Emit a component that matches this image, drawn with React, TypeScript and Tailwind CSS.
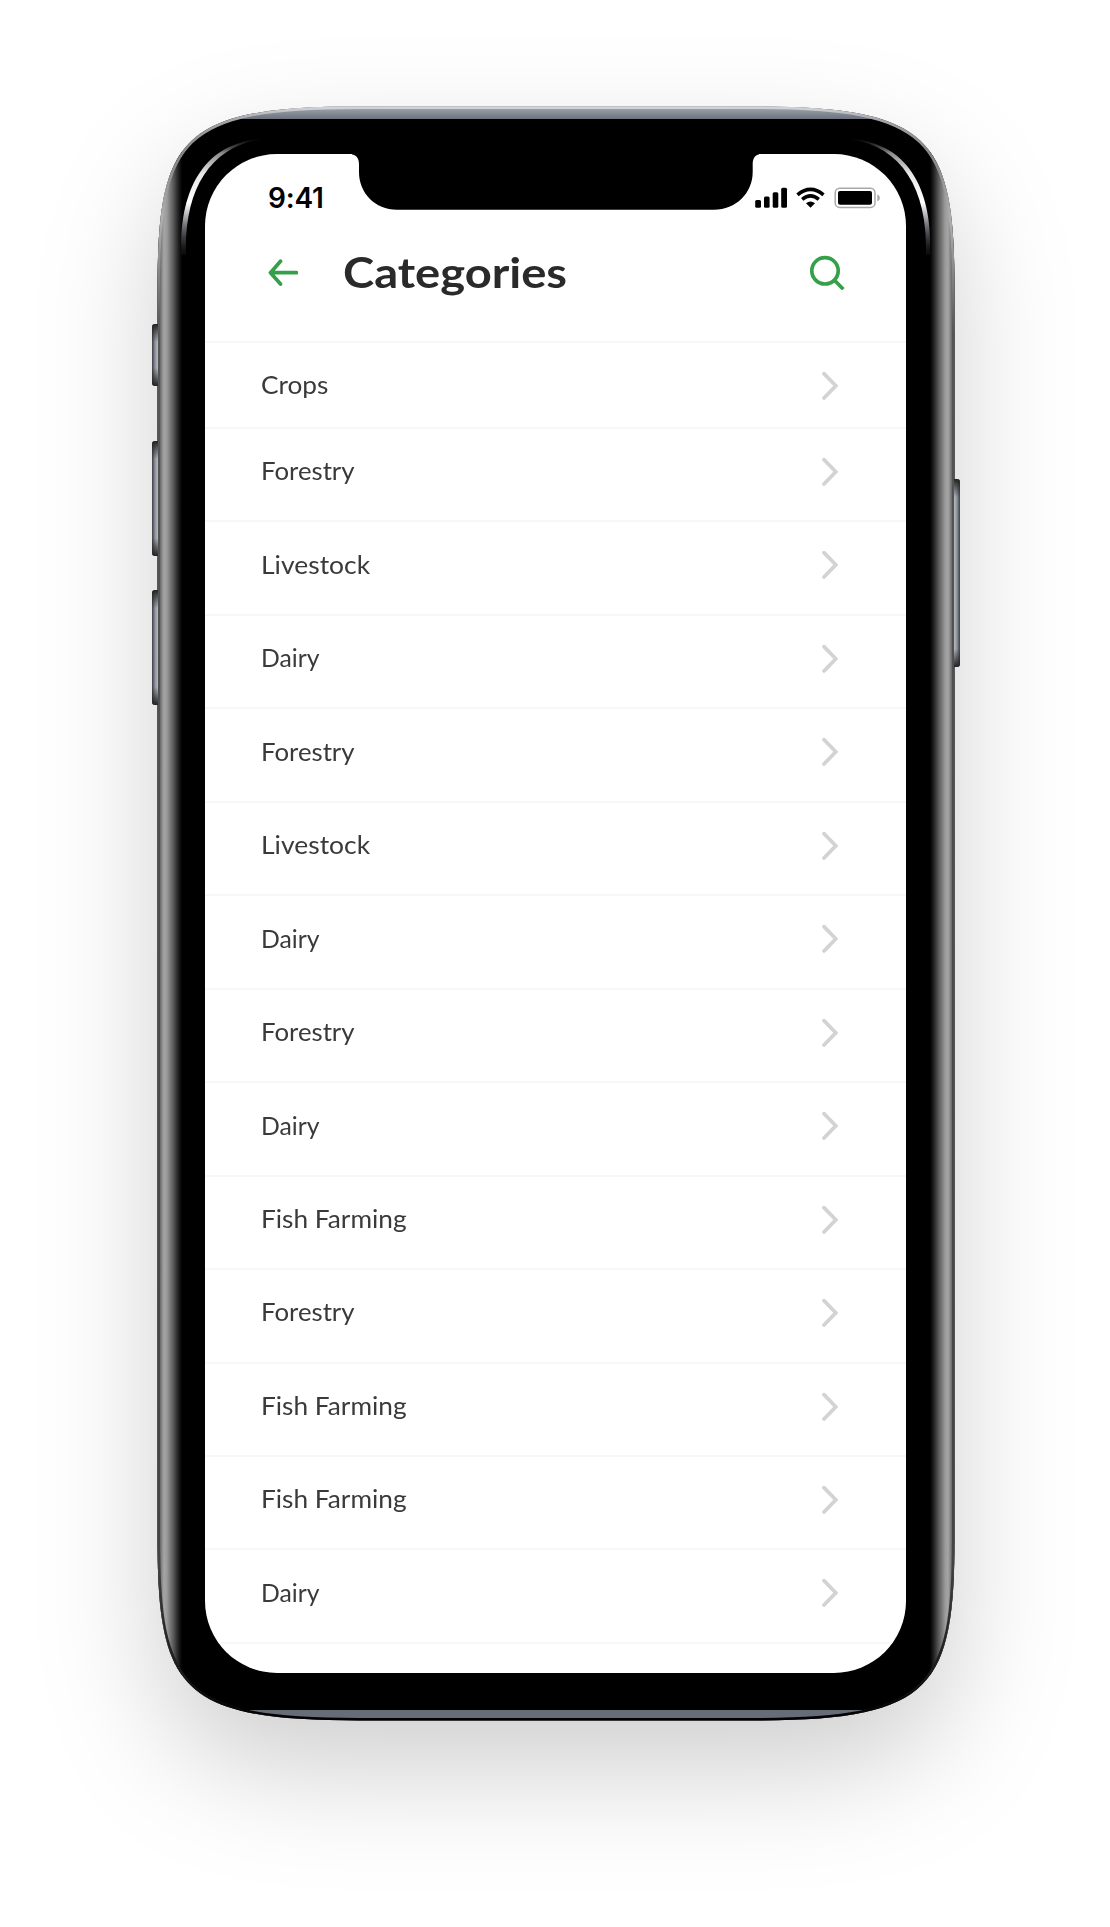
import React from "react";

const OUTLINE =
  "M0.5 184 C0.5 32 23 0.5 202 0.5 H596 C775 0.5 797.5 32 797.5 184 V1431 C797.5 1583 775 1614.5 596 1614.5 H202 C23 1614.5 0.5 1583 0.5 1431 Z";

const WIDTHS: Record<string, string> = {
  Crops: "scale-x-[1.05]",
  Forestry: "scale-x-[1.03]",
  Livestock: "scale-x-[1.058]",
  Dairy: "scale-x-[0.99]",
  "Fish Farming": "scale-x-[1.05]",
};

const CATEGORIES = [
  "Crops",
  "Forestry",
  "Livestock",
  "Dairy",
  "Forestry",
  "Livestock",
  "Dairy",
  "Forestry",
  "Dairy",
  "Fish Farming",
  "Forestry",
  "Fish Farming",
  "Fish Farming",
  "Dairy",
];

function PhoneBody() {
  return (
    <svg className="absolute inset-0 overflow-visible" width="798" height="1615" viewBox="0 0 798 1615" fill="none">
      <defs>
        <clipPath id="body">
          <path d={OUTLINE} />
        </clipPath>
        <linearGradient id="side" x1="0" x2="1" y1="0" y2="0">
          <stop offset="0" stopColor="#454545" />
          <stop offset="0.13" stopColor="#6b6b6b" />
          <stop offset="0.2" stopColor="#8a8a8a" />
          <stop offset="0.28" stopColor="#a6a6a6" />
          <stop offset="0.4" stopColor="#999999" />
          <stop offset="0.65" stopColor="#5a5a5a" />
          <stop offset="0.85" stopColor="#222222" />
          <stop offset="1" stopColor="#000000" />
        </linearGradient>
        <linearGradient id="top" x1="0" x2="0" y1="0" y2="1">
          <stop offset="0" stopColor="#d6d7dc" />
          <stop offset="0.22" stopColor="#cdced4" />
          <stop offset="0.27" stopColor="#969ca6" />
          <stop offset="1" stopColor="#6d737e" />
        </linearGradient>
        <linearGradient id="rim" x1="0" x2="0" y1="0" y2="1">
          <stop offset="0" stopColor="#d6d7dc" />
          <stop offset="0.008" stopColor="#a6a6a8" />
          <stop offset="0.03" stopColor="#858585" />
          <stop offset="0.07" stopColor="#b0b0b0" />
          <stop offset="0.14" stopColor="#555555" />
          <stop offset="0.9" stopColor="#444444" />
          <stop offset="0.97" stopColor="#1a1a1a" />
          <stop offset="1" stopColor="#000000" />
        </linearGradient>
        <linearGradient id="glint" x1="0" x2="0" y1="33" y2="149" gradientUnits="userSpaceOnUse">
          <stop offset="0" stopColor="#333" stopOpacity="0.2" />
          <stop offset="0.12" stopColor="#8a8a8a" />
          <stop offset="0.3" stopColor="#e8e8e8" />
          <stop offset="0.55" stopColor="#ffffff" />
          <stop offset="0.75" stopColor="#6f7078" />
          <stop offset="1" stopColor="#222" stopOpacity="0.3" />
        </linearGradient>
        <filter id="soft" x="-300" y="-300" width="1400" height="2300" filterUnits="userSpaceOnUse">
          <feGaussianBlur stdDeviation="58" />
        </filter>
      </defs>
      <path d={OUTLINE} transform="translate(0 50)" fill="#000" fillOpacity="0.19" filter="url(#soft)" />
      <g clipPath="url(#body)">
        <rect width="798" height="1615" fill="#000" />
        <rect width="25" height="1615" fill="url(#side)" />
        <rect width="25" height="1615" fill="url(#side)" transform="translate(798 0) scale(-1 1)" />
        <rect x="74" width="650" height="13" fill="url(#top)" />
        <rect x="90" y="1604" width="618" height="8" fill="#666d78" />
        <path d={OUTLINE} stroke="url(#rim)" strokeWidth="5" />
      </g>
      <path d="M24.500 149 C22 90 43 37 104 33 C54 41 27 82 29 149 Z" fill="url(#glint)" />
      <path d="M773 149 C776 90 755 37 694 33 C744 41 771 82 769 149 Z" fill="url(#glint)" />
    </svg>
  );
}

function SideButton({ className }: { className: string }) {
  return (
    <div className={`absolute w-[6px] overflow-hidden ${className}`}>
      <div className="h-full w-full bg-linear-to-b from-[#222] via-transparent via-[18px] to-transparent">
        <div className="h-full w-full bg-linear-to-t from-[#222] via-transparent via-[18px] to-transparent" />
      </div>
    </div>
  );
}

function Notch() {
  return (
    <svg className="absolute top-0 left-[147px]" width="407" height="57" viewBox="0 0 407 57">
      <path
        d="M0 0.500 C4.500 1 7 4.500 7 10.500 V18 C7 39 23 55.800 45 55.800 H362 C384 55.800 400.700 39 400.700 18 V10.500 C400.700 4.500 403 1 407 0.500 V0 H0 Z"
        fill="#000"
      />
    </svg>
  );
}

function StatusIcons() {
  return (
    <svg width="126" height="22" viewBox="0 0 126 22" fill="none">
      <g fill="#000">
        <rect x="0.200" y="13" width="5.800" height="7.700" rx="1.500" />
        <rect x="9" y="9.500" width="5.600" height="11.200" rx="1.500" />
        <rect x="17.700" y="5.200" width="5.600" height="15.500" rx="1.500" />
        <rect x="26.200" y="0.700" width="5.800" height="20" rx="1.500" />
      </g>
      <g stroke="#000" strokeWidth="3.600">
        <path d="M42.500 7.800 Q55.500 -3.200 68.500 7.800" />
        <path d="M47.200 12.300 Q55.500 5.600 63.800 12.300" />
      </g>
      <path d="M51 16.300 Q55.500 12.900 60 16.300 L55.500 20.800 Z" fill="#000" />
      <rect x="80.200" y="1.200" width="39.800" height="19.200" rx="4.500" stroke="#a8a8a8" strokeWidth="1.500" />
      <rect x="83" y="4" width="34" height="13.700" rx="2" fill="#000" />
      <path d="M122.300 7.200 Q124.900 8.400 124.900 11 Q124.900 13.500 122.300 14.600 Z" fill="#a8a8a8" />
    </svg>
  );
}

function BackIcon() {
  return (
    <svg width="30" height="28" viewBox="0 0 30 28" fill="none" stroke="#35a049" strokeWidth="3.700" strokeLinecap="round" strokeLinejoin="round">
      <path d="M12.500 3.200 L2.500 14.700 L12.500 26 M2.500 14.700 H28.500" />
    </svg>
  );
}

function SearchIcon() {
  return (
    <svg width="36" height="36" viewBox="0 0 36 36" fill="none" stroke="#35a049" strokeWidth="3.700">
      <circle cx="16" cy="16.800" r="13.200" />
      <path d="M25.500 26.300 L34.300 35.200" />
    </svg>
  );
}

function Chevron() {
  return (
    <svg width="16" height="30" viewBox="0 0 16 30" fill="none" stroke="#d3d3d3" strokeWidth="3.700" strokeLinecap="round" strokeLinejoin="miter">
      <path d="M2 2.600 L13.800 14.800 L2 27" />
    </svg>
  );
}

export default function App() {
  return (
    <div className="h-[1927px] w-[1110px] overflow-hidden bg-white pt-[106px] pl-[157px]">
      <div className="relative h-[1615px] w-[798px] pt-[48px] pl-[48px]">
        <PhoneBody />
        <SideButton className="top-[218px] -left-[5.5px] h-[62px] rounded-l-[3px] bg-linear-to-r from-[#3d3f42] via-[#8a929c] to-[#b9bcc0]" />
        <SideButton className="top-[335px] -left-[5.5px] h-[115px] rounded-l-[3px] bg-linear-to-r from-[#3d3f42] via-[#8a929c] to-[#b9bcc0]" />
        <SideButton className="top-[484px] -left-[5.5px] h-[115px] rounded-l-[3px] bg-linear-to-r from-[#3d3f42] via-[#8a929c] to-[#b9bcc0]" />
        <SideButton className="top-[373px] -right-[5px] h-[188px] rounded-r-[3px] bg-linear-to-l from-[#3d3f42] via-[#8a929c] to-[#b9bcc0]" />

        <main className="relative h-[1518.500px] w-[701px] overflow-hidden rounded-[72px] bg-white pt-px">
          <Notch />
          <div className="flex h-[85px] items-center justify-between pr-[25px] pl-[63px]">
            <span className="font-[Inter] text-[28px] font-semibold tracking-[-0.200px] text-black">9:41</span>
            <StatusIcons />
          </div>
          <header className="flex h-[101px] items-start pr-[61px] pl-[63px]">
            <div className="flex h-[63px] flex-1 items-center">
              <BackIcon />
              <h1 className="mt-[1px] ml-[45px] origin-left scale-x-[1.108] font-[Lato] text-[42.500px] leading-none font-bold text-[#2a2a2a]">
                Categories
              </h1>
            </div>
            <div className="flex h-[63px] items-center">
              <SearchIcon />
            </div>
          </header>
          <ul className="font-[Lato] text-[25px] text-[#3a3a3a]">
            {CATEGORIES.map((name, i) => (
              <li
                key={i}
                className="flex h-[93.460px] items-start justify-between border-t-2 border-[#f7f7f7] pr-[68px] pl-[56px] first:h-[86px]"
              >
                <span className={`mt-[26.4px] origin-left leading-[30px] ${WIDTHS[name]}`}>{name}</span>
                <span className="mt-[28px]">
                  <Chevron />
                </span>
              </li>
            ))}
            <li className="border-t-2 border-[#f7f7f7]" />
          </ul>
        </main>
      </div>
    </div>
  );
}
